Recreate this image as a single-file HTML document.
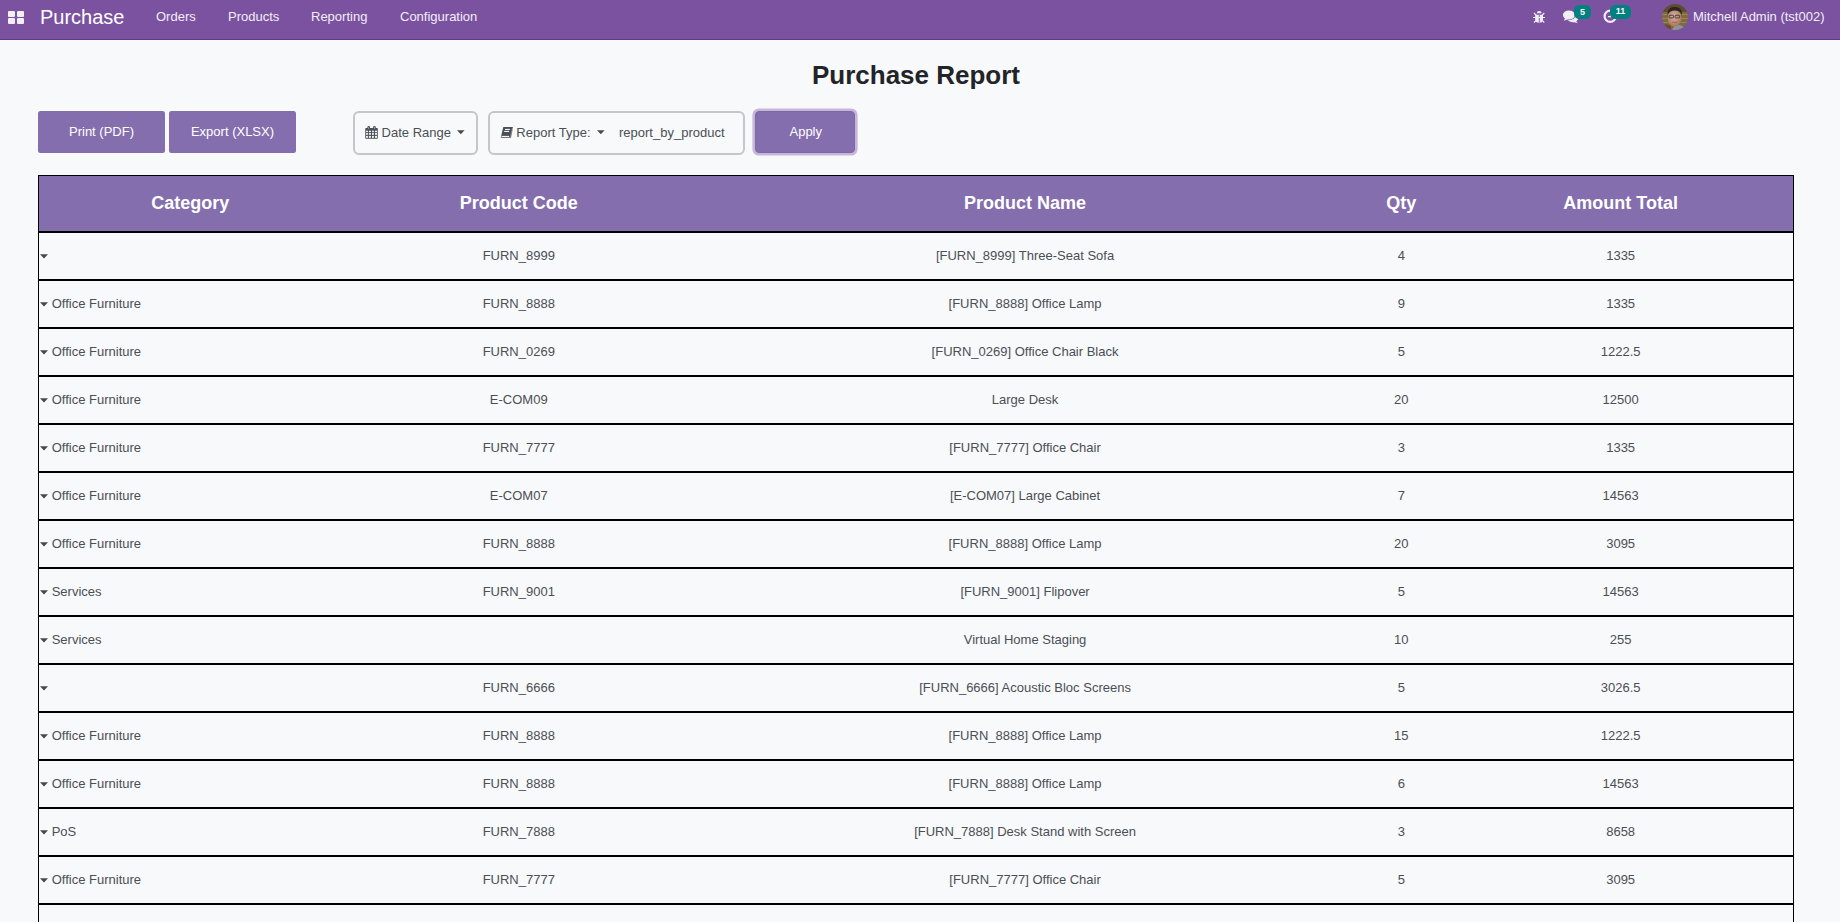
<!DOCTYPE html>
<html><head><meta charset="utf-8">
<style>
*{box-sizing:border-box;margin:0;padding:0}
html,body{width:1840px;height:922px;overflow:hidden}
body{background:#f8f9fa;font-family:"Liberation Sans",sans-serif;font-size:13px;color:#4a4f55;position:relative}
.nav{position:absolute;left:0;top:0;width:1840px;height:40px;background:#7b52a0;border-bottom:1px solid #5e3d80}
.nav .t{position:absolute;color:#f2eef7;font-size:13px;line-height:15px;top:9px;white-space:nowrap}
.brand{position:absolute;left:40px;top:6px;font-size:20px;line-height:23px;color:#fff;white-space:nowrap}
.apps{position:absolute;left:8px;top:11px;width:16px;height:13px}
.apps i{position:absolute;width:7px;height:6px;background:#f1eef5;border-radius:1px}
h2{position:absolute;left:0;width:1832px;text-align:center;top:60px;font-size:26px;line-height:30px;font-weight:bold;color:#212529}
.btn{position:absolute;top:111px;height:42px;width:127px;background:#846eae;color:#fff;border-radius:2.5px;text-align:center;line-height:42px}
.box{position:absolute;top:111px;height:44px;border:2px solid #c6c6c6;border-radius:6px;background:#f8f9fa}
.box .t{position:absolute;top:12px;line-height:15px;white-space:nowrap;color:#4a4f55}
.apply{position:absolute;left:755px;top:111px;width:100px;height:42px}
.apply div{position:absolute;left:0;top:0;width:100px;height:42px;border-radius:4px;background:#846eae;border:1px solid #7d69a9;box-shadow:0 0 0 2.6px #c8b6d9;color:#fff;text-align:center;line-height:39.6px;padding-left:1.5px}
table{position:absolute;left:38px;top:175px;border-collapse:collapse;table-layout:fixed;width:1756px}
th{background:#846eae;color:#fff;font-size:18px;font-weight:bold;height:56px;border-top:1px solid #000;border-bottom:2px solid #000;text-align:center;vertical-align:middle;padding:0}
td{height:48px;border-bottom:2px solid #000;text-align:center;vertical-align:middle;padding:0;color:#4a4f55}
table{border-left:1px solid #000;border-right:1px solid #000}
td.c{text-align:left}
.badge{position:absolute;top:5px;height:14px;border-radius:5.5px;background:#00807f;color:#fff;font-size:9px;font-weight:bold;line-height:12.4px;text-align:center}
.dcaret{position:absolute;top:16.8px}
.caret{display:inline-block;vertical-align:middle;margin:0 3.4px 2px 1.3px;position:relative;top:0.7px}
</style></head><body>
<div class="nav">
  <div class="apps"><i style="left:0;top:0"></i><i style="left:9px;top:0"></i><i style="left:0;top:7px"></i><i style="left:9px;top:7px"></i></div>
  <div class="brand">Purchase</div>
  <div class="t" style="left:156px">Orders</div>
  <div class="t" style="left:228px">Products</div>
  <div class="t" style="left:311px">Reporting</div>
  <div class="t" style="left:400px">Configuration</div>
  <div class="t" style="left:1693px">Mitchell Admin (tst002)</div>

  <svg style="position:absolute;left:1530px;top:8px" width="18" height="18" viewBox="0 0 18 18">
    <path d="M6.8 5.3 A2.4 2.4 0 0 1 11.6 5.3 Z" fill="#f1eef5"/>
    <path d="M5.2 6.8 H13 V11.2 A3.9 3.6 0 0 1 5.2 11.2 Z" fill="#f1eef5"/>
    <rect x="8.8" y="6.6" width="0.9" height="8" fill="#7b52a0"/>
    <path d="M3 9.5 H15 M4 5 L6.3 7.3 M14.3 5 L12 7.3 M4 14.5 L6.2 12.3 M14.3 14.5 L12.1 12.3" stroke="#f1eef5" stroke-width="1.2" fill="none"/>
  </svg>
  <svg style="position:absolute;left:1560px;top:8px" width="20" height="18" viewBox="0 0 20 18">
    <ellipse cx="12.6" cy="9.6" rx="6" ry="4.6" fill="#f1eef5"/>
    <path d="M15.5 12.5 L17.9 15 L12.5 14" fill="#f1eef5"/>
    <g fill="#7b52a0" stroke="#7b52a0" stroke-width="1.4"><ellipse cx="8.9" cy="7" rx="6" ry="4.5"/><path d="M5 10 L4.1 12.7 L8 11.2Z"/></g>
    <g fill="#f1eef5"><ellipse cx="8.9" cy="7" rx="6" ry="4.5"/><path d="M5 10 L4.1 12.7 L8 11.2Z"/></g>
  </svg>
  <div class="badge" style="left:1574px;width:17px;line-height:14px">5</div>
  <svg style="position:absolute;left:1600px;top:6px" width="20" height="20" viewBox="0 0 20 20">
    <circle cx="10.2" cy="10.3" r="5.6" fill="none" stroke="#f1eef5" stroke-width="2.2"/>
    <path d="M7.9 10.7 H11 V6" stroke="#f1eef5" stroke-width="1.2" fill="none"/>
  </svg>
  <div class="badge" style="left:1610px;width:21px">11</div>
  <div style="position:absolute;left:1662px;top:4px;width:26px;height:26px;border-radius:50%;overflow:hidden"><svg width="26" height="26" viewBox="0 0 26 26">
    <defs><radialGradient id="fg" cx="0.45" cy="0.4" r="0.6"><stop offset="0" stop-color="#dcae9c"/><stop offset="1" stop-color="#a8785e"/></radialGradient></defs>
      <rect width="26" height="26" fill="#806a42"/>
      <rect x="0" y="0" width="26" height="8" fill="#5e4c32"/>
      <rect x="0" y="10" width="26" height="1" fill="#9a8452"/>
      <rect x="0" y="14" width="26" height="1" fill="#9a8452"/>
      <rect x="0" y="18" width="26" height="1" fill="#9a8452"/>
      <path d="M0 21 Q5 19 9 22 L9 26 H0Z" fill="#6a4a30"/>
      <path d="M10 26 Q12 21 17 21 Q22 22 24 26Z" fill="#8c9598"/>
      <ellipse cx="12.5" cy="14" rx="6.8" ry="8.6" fill="url(#fg)"/>
      <path d="M5.5 11.5 Q5 2.5 13 3 Q21 3 19.8 12 Q18.8 6.5 13 6.6 Q7 6.6 5.5 11.5Z" fill="#2b2420"/>
      <rect x="7" y="11.3" width="4.6" height="2.6" rx="0.8" fill="none" stroke="#3a3538" stroke-width="0.9"/>
      <rect x="13" y="11.3" width="4.6" height="2.6" rx="0.8" fill="none" stroke="#3a3538" stroke-width="0.9"/>
      <path d="M10.3 18 Q12.8 19.3 15.3 18" stroke="#a8605a" stroke-width="1" fill="none"/>
  </svg></div>
</div>
<h2>Purchase Report</h2>
<div class="btn" style="left:38px">Print (PDF)</div>
<div class="btn" style="left:169px">Export (XLSX)</div>
<div class="box" style="left:353px;width:125px"><span class="t" style="left:26.6px">Date Range</span><svg class="dcaret" style="left:102.3px" width="8" height="5" viewBox="0 0 8 5"><path d="M0 0.2H7.6L3.8 4.2Z" fill="#454a50"/></svg></div>
<svg style="position:absolute;left:365px;top:126px" width="13" height="13" viewBox="0 0 13 13">
  <rect x="0.25" y="2.1" width="12.55" height="10.6" rx="0.8" fill="#495057"/>
  <g fill="#f8f9fa">
    <rect x="1.1" y="4.7" width="1.8" height="1.5"/><rect x="3.9" y="4.7" width="2" height="1.5"/><rect x="7" y="4.7" width="1.9" height="1.5"/><rect x="10" y="4.7" width="2" height="1.5"/>
    <rect x="1.1" y="7.1" width="1.8" height="1.7"/><rect x="3.9" y="7.1" width="2" height="1.7"/><rect x="7" y="7.1" width="1.9" height="1.7"/><rect x="10" y="7.1" width="2" height="1.7"/>
    <rect x="1.1" y="9.9" width="1.8" height="1.9"/><rect x="3.9" y="9.9" width="2" height="1.9"/><rect x="7" y="9.9" width="1.9" height="1.9"/><rect x="10" y="9.9" width="2" height="1.9"/>
  </g>
  <rect x="2.4" y="0" width="2.6" height="3.6" rx="1" fill="#495057"/><rect x="8.1" y="0" width="2.6" height="3.6" rx="1" fill="#495057"/>
  <rect x="3.3" y="0.8" width="0.8" height="2.4" fill="#f8f9fa" opacity="0.5"/><rect x="9" y="0.8" width="0.8" height="2.4" fill="#f8f9fa" opacity="0.5"/>
</svg>
<div class="box" style="left:488px;width:257px"><span class="t" style="left:26.3px">Report Type:</span><svg class="dcaret" style="left:107px" width="8" height="5" viewBox="0 0 8 5"><path d="M0 0.2H7.6L3.8 4.2Z" fill="#454a50"/></svg><span class="t" style="left:129px">report_by_product</span></div>
<svg style="position:absolute;left:500px;top:127px" width="14" height="11" viewBox="0 0 14 11">
  <path d="M3.3 0 H12.2 L13 0.6 L11 10.8 H0.7 Z" fill="#495057"/>
  <path d="M12.6 1 L10.5 10.2" stroke="#f8f9fa" stroke-width="0.6" opacity="0.6"/>
  <rect x="5" y="1.9" width="4.8" height="1.1" fill="#f8f9fa"/>
  <rect x="4.2" y="3.9" width="4.9" height="1.1" fill="#f8f9fa"/>
  <rect x="1.5" y="8.9" width="7.6" height="1.1" fill="#f8f9fa"/>
</svg>
<div class="apply"><div>Apply</div></div>
<table>
<colgroup><col style="width:303px"><col style="width:354px"><col style="width:658px"><col style="width:94px"><col style="width:345px"></colgroup>
<thead><tr><th>Category</th><th>Product Code</th><th>Product Name</th><th>Qty</th><th>Amount Total</th></tr></thead>
<tbody>
<tr><td class="c"><svg class="caret" width="8" height="5" viewBox="0 0 8 5"><path d="M0 0.3H8L4 4.6Z" fill="#454a50"/></svg></td><td>FURN_8999</td><td>[FURN_8999] Three-Seat Sofa</td><td>4</td><td>1335</td></tr>
<tr><td class="c"><svg class="caret" width="8" height="5" viewBox="0 0 8 5"><path d="M0 0.3H8L4 4.6Z" fill="#454a50"/></svg>Office Furniture</td><td>FURN_8888</td><td>[FURN_8888] Office Lamp</td><td>9</td><td>1335</td></tr>
<tr><td class="c"><svg class="caret" width="8" height="5" viewBox="0 0 8 5"><path d="M0 0.3H8L4 4.6Z" fill="#454a50"/></svg>Office Furniture</td><td>FURN_0269</td><td>[FURN_0269] Office Chair Black</td><td>5</td><td>1222.5</td></tr>
<tr><td class="c"><svg class="caret" width="8" height="5" viewBox="0 0 8 5"><path d="M0 0.3H8L4 4.6Z" fill="#454a50"/></svg>Office Furniture</td><td>E-COM09</td><td>Large Desk</td><td>20</td><td>12500</td></tr>
<tr><td class="c"><svg class="caret" width="8" height="5" viewBox="0 0 8 5"><path d="M0 0.3H8L4 4.6Z" fill="#454a50"/></svg>Office Furniture</td><td>FURN_7777</td><td>[FURN_7777] Office Chair</td><td>3</td><td>1335</td></tr>
<tr><td class="c"><svg class="caret" width="8" height="5" viewBox="0 0 8 5"><path d="M0 0.3H8L4 4.6Z" fill="#454a50"/></svg>Office Furniture</td><td>E-COM07</td><td>[E-COM07] Large Cabinet</td><td>7</td><td>14563</td></tr>
<tr><td class="c"><svg class="caret" width="8" height="5" viewBox="0 0 8 5"><path d="M0 0.3H8L4 4.6Z" fill="#454a50"/></svg>Office Furniture</td><td>FURN_8888</td><td>[FURN_8888] Office Lamp</td><td>20</td><td>3095</td></tr>
<tr><td class="c"><svg class="caret" width="8" height="5" viewBox="0 0 8 5"><path d="M0 0.3H8L4 4.6Z" fill="#454a50"/></svg>Services</td><td>FURN_9001</td><td>[FURN_9001] Flipover</td><td>5</td><td>14563</td></tr>
<tr><td class="c"><svg class="caret" width="8" height="5" viewBox="0 0 8 5"><path d="M0 0.3H8L4 4.6Z" fill="#454a50"/></svg>Services</td><td></td><td>Virtual Home Staging</td><td>10</td><td>255</td></tr>
<tr><td class="c"><svg class="caret" width="8" height="5" viewBox="0 0 8 5"><path d="M0 0.3H8L4 4.6Z" fill="#454a50"/></svg></td><td>FURN_6666</td><td>[FURN_6666] Acoustic Bloc Screens</td><td>5</td><td>3026.5</td></tr>
<tr><td class="c"><svg class="caret" width="8" height="5" viewBox="0 0 8 5"><path d="M0 0.3H8L4 4.6Z" fill="#454a50"/></svg>Office Furniture</td><td>FURN_8888</td><td>[FURN_8888] Office Lamp</td><td>15</td><td>1222.5</td></tr>
<tr><td class="c"><svg class="caret" width="8" height="5" viewBox="0 0 8 5"><path d="M0 0.3H8L4 4.6Z" fill="#454a50"/></svg>Office Furniture</td><td>FURN_8888</td><td>[FURN_8888] Office Lamp</td><td>6</td><td>14563</td></tr>
<tr><td class="c"><svg class="caret" width="8" height="5" viewBox="0 0 8 5"><path d="M0 0.3H8L4 4.6Z" fill="#454a50"/></svg>PoS</td><td>FURN_7888</td><td>[FURN_7888] Desk Stand with Screen</td><td>3</td><td>8658</td></tr>
<tr><td class="c"><svg class="caret" width="8" height="5" viewBox="0 0 8 5"><path d="M0 0.3H8L4 4.6Z" fill="#454a50"/></svg>Office Furniture</td><td>FURN_7777</td><td>[FURN_7777] Office Chair</td><td>5</td><td>3095</td></tr>
<tr><td class="c"><svg class="caret" width="8" height="5" viewBox="0 0 8 5"><path d="M0 0.3H8L4 4.6Z" fill="#454a50"/></svg></td><td></td><td></td><td></td><td></td></tr>
</tbody>
</table>
</body></html>
